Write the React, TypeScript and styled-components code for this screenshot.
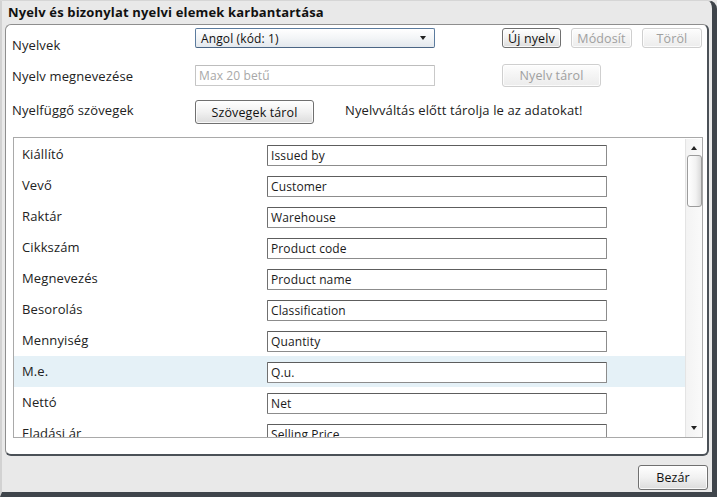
import React from "react";
import styled, { createGlobalStyle } from "styled-components";

const Global = createGlobalStyle`
  html, body { margin: 0; padding: 0; background: #e9e9e9; }
  body { font-family: "Open Sans", "Noto Sans", sans-serif; color: #222; letter-spacing: 0.12px; }
  * { box-sizing: border-box; }
`;

const Window = styled.div`
  width: 717px;
  height: 497px;
  background: #e9e9e9;
  border-left: 2px solid #d2d2d2;
  border-top: 1px solid #d6d6d6;
  border-right: 5px solid #3f454b;
  border-bottom: 5px solid #3f454b;
  border-top-right-radius: 9px;
  display: flex;
  flex-direction: column;
`;

const Title = styled.div`
  height: 23px;
  padding-left: 6px;
  font-weight: 700;
  font-size: 13px;
  line-height: 23px;
  letter-spacing: 0.16px;
  color: #111;
  white-space: nowrap;
`;

const Panel = styled.div`
  margin: 0 3px 0 3px;
  height: 432px;
  background: #fff;
  border: 1px solid #8e8e8e;
  border-right: 2px solid #4b5157;
  border-bottom: 2px solid #4b5157;
  border-radius: 6px;
  display: flex;
  flex-direction: column;
  padding: 3px 4px 0 6px;
`;

const FormRow = styled.div<{ $h: number }>`
  display: flex;
  align-items: flex-start;
  height: ${(p) => p.$h}px;
`;

const Label = styled.div<{ $top: number }>`
  width: 183px;
  flex: none;
  margin-top: ${(p) => p.$top}px;
  font-size: 13px;
  line-height: 16px;
  color: #222;
  white-space: nowrap;
`;

const Combo = styled.div`
  width: 240px;
  height: 20px;
  flex: none;
  border: 1px solid #5b7b9e;
  border-bottom-color: #4a6584;
  border-radius: 2px;
  background: linear-gradient(#ffffff, #f3f5f7 50%, #e3e8ed);
  display: flex;
  align-items: center;
  justify-content: space-between;
  padding: 0 8px 0 5px;
  font-size: 12px;
  color: #111;
`;

const Arrow = styled.span<{ $up?: boolean }>`
  width: 0;
  height: 0;
  border-left: 3.5px solid transparent;
  border-right: 3.5px solid transparent;
  ${(p) =>
    p.$up
      ? "border-bottom: 4px solid #222;"
      : "border-top: 4px solid #222;"}
`;

const TextBox = styled.div<{ $w: number; $disabled?: boolean }>`
  width: ${(p) => p.$w}px;
  height: 21px;
  flex: none;
  border: 1px solid ${(p) => (p.$disabled ? "#c9c9c9" : "#8c8c8c")};
  border-top-color: ${(p) => (p.$disabled ? "#bdbdbd" : "#5d5d5d")};
  border-left-color: ${(p) => (p.$disabled ? "#c4c4c4" : "#707070")};
  border-radius: 1px;
  background: #fff;
  font-size: 12px;
  line-height: 19px;
  padding-left: 3px;
  color: ${(p) => (p.$disabled ? "#a8a8a8" : "#1a1a1a")};
  white-space: nowrap;
  overflow: hidden;
`;

const Button = styled.div<{ $w: number; $h: number; $disabled?: boolean }>`
  width: ${(p) => p.$w}px;
  height: ${(p) => p.$h}px;
  flex: none;
  border: 1px solid ${(p) => (p.$disabled ? "#cfcfcf" : "#707070")};
  border-radius: 3px;
  background: ${(p) =>
    p.$disabled
      ? "linear-gradient(#fdfdfd, #f4f4f4 50%, #ececec)"
      : "linear-gradient(#ffffff, #f1f1f1 50%, #dcdcdc)"};
  box-shadow: inset 0 0 0 1px rgba(255, 255, 255, 0.8);
  display: flex;
  align-items: center;
  justify-content: center;
  font-size: 12.5px;
  color: ${(p) => (p.$disabled ? "#a0a0a0" : "#111")};
  white-space: nowrap;
`;

const ButtonGroup = styled.div<{ $ml: number; $mt?: number }>`
  display: flex;
  gap: 10px;
  margin-left: ${(p) => p.$ml}px;
  margin-top: ${(p) => p.$mt ?? 0}px;
`;

const Info = styled.div`
  margin-left: 31px;
  margin-top: 2px;
  font-size: 13px;
  line-height: 16px;
  color: #222;
  white-space: nowrap;
`;

const List = styled.div`
  margin: 13px 0 0 1px;
  height: 301px;
  border: 1px solid #a9a9a9;
  display: flex;
  padding: 1px 0 0 0;
`;

const Viewport = styled.div`
  flex: 1;
  overflow: hidden;
`;

const Row = styled.div<{ $sel?: boolean }>`
  height: 31px;
  display: flex;
  align-items: flex-start;
  background: ${(p) => (p.$sel ? "#e5f1f7" : "transparent")};
  padding-left: 8px;
`;

const RowLabel = styled.div`
  width: 245px;
  flex: none;
  font-size: 13px;
  line-height: 16px;
  margin-top: 7px;
  color: #222;
  white-space: nowrap;
`;

const RowInput = styled(TextBox)`
  margin-top: 6px;
`;

const ScrollBar = styled.div`
  width: 17px;
  flex: none;
  border-left: 1px solid #e4e4e4;
  background: linear-gradient(to right, #f3f3f3, #fafafa);
  display: flex;
  flex-direction: column;
  align-items: center;
  padding: 7px 0 7px 0;
`;

const Thumb = styled.div`
  width: 15px;
  height: 52px;
  margin-top: 5px;
  border: 1px solid #9c9c9c;
  border-radius: 3px;
  background: linear-gradient(to right, #ffffff, #f2f2f2 60%, #d9d9d9);
`;

const Spacer = styled.div`
  flex: 1;
`;

const Footer = styled.div`
  flex: 1;
  display: flex;
  justify-content: flex-end;
  align-items: flex-start;
  padding: 9px 4px 0 0;
`;

const rows: [string, string][] = [
  ["Kiállító", "Issued by"],
  ["Vevő", "Customer"],
  ["Raktár", "Warehouse"],
  ["Cikkszám", "Product code"],
  ["Megnevezés", "Product name"],
  ["Besorolás", "Classification"],
  ["Mennyiség", "Quantity"],
  ["M.e.", "Q.u."],
  ["Nettó", "Net"],
  ["Eladási ár", "Selling Price"],
];

export default function App() {
  return (
    <>
      <Global />
      <Window>
        <Title>Nyelv és bizonylat nyelvi elemek karbantartása</Title>
        <Panel>
          <FormRow $h={37}>
            <Label $top={9}>Nyelvek</Label>
            <Combo>
              <span>Angol (kód: 1)</span>
              <Arrow />
            </Combo>
            <ButtonGroup $ml={67}>
              <Button $w={59} $h={20}>Új nyelv</Button>
              <Button $w={61} $h={20} $disabled>Módosít</Button>
              <Button $w={60} $h={20} $disabled>Töröl</Button>
            </ButtonGroup>
          </FormRow>
          <FormRow $h={35}>
            <Label $top={3}>Nyelv megnevezése</Label>
            <TextBox $w={240} $disabled>Max 20 betű</TextBox>
            <ButtonGroup $ml={67} $mt={-1}>
              <Button $w={99} $h={23} $disabled>Nyelv tárol</Button>
            </ButtonGroup>
          </FormRow>
          <FormRow $h={24}>
            <Label $top={2}>Nyelfüggő szövegek</Label>
            <Button $w={119} $h={24}>Szövegek tárol</Button>
            <Info>Nyelvváltás előtt tárolja le az adatokat!</Info>
          </FormRow>
          <List>
            <Viewport>
              {rows.map(([l, v]) => (
                <Row key={l} $sel={l === "M.e."}>
                  <RowLabel>{l}</RowLabel>
                  <RowInput $w={340}>{v}</RowInput>
                </Row>
              ))}
            </Viewport>
            <ScrollBar>
              <Arrow $up />
              <Thumb />
              <Spacer />
              <Arrow />
            </ScrollBar>
          </List>
        </Panel>
        <Footer>
          <Button $w={70} $h={25}>Bezár</Button>
        </Footer>
      </Window>
    </>
  );
}
